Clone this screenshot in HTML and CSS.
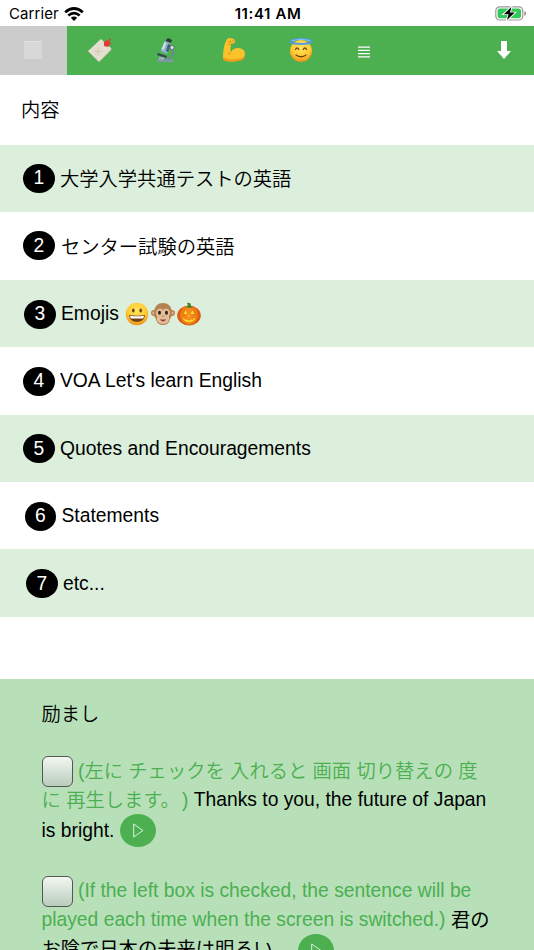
FILE: index.html
```html
<!DOCTYPE html>
<html lang="ja">
<head>
  <meta charset="UTF-8">
  <meta name="viewport" content="width=device-width, initial-scale=1.0">
  <title>英語</title>
  <link rel="stylesheet" href="styles.css">
</head>
<body>
  <!-- Status Bar -->
  <header class="status">
    <div class="carrier">
      <span>Carrier</span>
      <svg class="wifi" viewBox="0 0 20 14" fill="none" stroke="#000" stroke-width="2.7">
        <path d="M1.2 5.2Q10-2.2 18.8 5.2M4.3 8.5Q10 3.8 15.7 8.5"/>
        <path d="M6.8 10.8Q10 8.2 13.2 10.8L10 14Z" fill="#000" stroke="none"/>
      </svg>
    </div>
    <span class="time">11:41 AM</span>
    <svg class="battery" viewBox="0 0 32 15">
      <rect x=".8" y=".8" width="27" height="13.2" rx="4" fill="#fff" stroke="#999" stroke-width="1.2"/>
      <rect x="2.6" y="2.6" width="23.4" height="9.6" rx="2.3" fill="#34c759"/>
      <path d="M29.3 5v5q1.9-.7 1.9-2.5T29.3 5Z" fill="#999"/>
      <path d="M16.4 1 8.8 8.2h4.700L12 14l7.8-7.4H15Z" fill="#000" stroke="#fff" stroke-width="1.8" paint-order="stroke"/>
    </svg>
  </header>

  <!-- Tabs -->
  <nav class="tabs">
    <a class="tab active">
      <svg class="icon" viewBox="0 0 24 24">
        <rect x="3" y="3" width="18" height="18" rx="1" fill="#d8d8d8"/>
        <path d="M3.5 3.5h17" stroke="#e2e2e2"/>
      </svg>
    </a>
    <a class="tab">
      <svg class="icon" viewBox="0 0 24 24">
        <path d="M0 13 13 1l10 9q.8 1 0 2L11 24Z" fill="#e5dfd1"/>
        <path d="m0 13 11 10.500L23 11" fill="none" stroke="#d0cabb" stroke-width=".6"/>
        <g stroke="#cfc8b8" stroke-width=".7"><path d="M10 9v9M5.500 13.500h9M7 10.500l6 6M13 10.500l-6 6"/></g>
        <path d="m16 5 3-2 1 1 2.500-3M19 8l4-3" fill="none" stroke="#e33b38" stroke-width="1.5"/>
        <path d="m16 4 5-1 1 3-2 3-4-1Z" fill="#e33b38"/>
      </svg>
    </a>
    <a class="tab">
      <svg class="icon" viewBox="0 0 24 24">
        <path d="M16 11q4 3 1 7-2 3-6 3.500" fill="none" stroke="#718795" stroke-width="2"/>
        <path d="m10 3 6 3-4 10-6.500-3Z" fill="#8fb1c7"/>
        <path d="m9.500 4-3 7 2 1 3-7Z" fill="#cfe2ee"/>
        <path d="m11 2 2-2 4 2-1 3-5-2Z" fill="#303940"/>
        <path d="m13 6 3 1-3 7-2-1Z" fill="#425f74"/>
        <circle cx="17" cy="9.500" r="2" fill="#e3e8ea" stroke="#56656e" stroke-width=".8"/>
        <path d="m3 15 9 3-1 2-9-3Z" fill="#34434c"/>
        <path d="M3 21.500h15l1 2.500H2Z" fill="#8296a3"/>
        <path d="M4 19h5v3H4Z" fill="#9bafba"/>
      </svg>
    </a>
    <a class="tab">
      <svg class="icon" viewBox="0 0 24 24">
        <path d="M5 1q3-2 7 0 1 .6 1 2.500 0 1.600-1.500 2L9 6q-1 5 0 8 2-4 7-4 7 .3 7 6.500 0 6-8 6.500-7 1-11 0Q.7 22 1 19 1 8 5 1Z" fill="#fbc22b"/>
        <path d="M1 19q0 3 3 4 4 1 11 0 8-.5 8-6.500-2 4.500-8 4.500Q6 23 1 19Z" fill="#ef981a"/>
        <path d="M6 3q1 2 3 1M8 1.500l1 3M11 1.500v3M9 14q-1 2-3 2.500M9 6q-2 1-3 .5" fill="none" stroke="#d88b19" stroke-width=".8"/>
      </svg>
    </a>
    <a class="tab">
      <svg class="icon" viewBox="0 0 24 24">
        <defs>
          <radialGradient id="face" cx=".5" cy=".35" r=".65">
            <stop offset="0" stop-color="#ffe65b"/>
            <stop offset=".65" stop-color="#ffc934"/>
            <stop offset="1" stop-color="#ed8d18"/>
          </radialGradient>
        </defs>
        <circle cx="12" cy="13" r="11" fill="url(#face)"/>
        <ellipse cx="12" cy="3.500" rx="10.300" ry="2.500" fill="none" stroke="#559ce0" stroke-width="2"/>
        <path d="M3 2.700q9-3 18 0" fill="none" stroke="#93cbf6" stroke-width=".8"/>
        <path d="M6.500 11.500q1.700-3 3.300 0M14.200 11.500q1.700-3 3.300 0M7 17q5 3.500 10 0" fill="none" stroke="#714315" stroke-width="1.300" stroke-linecap="round"/>
      </svg>
    </a>
    <a class="tab menu">
      <svg viewBox="0 0 12 12" width="12" height="12" stroke="#fff" stroke-width="1.200">
        <path d="M0 1.200h12M0 4.400h12M0 7.600h12M0 10.800h12"/>
      </svg>
    </a>
    <a class="tab download">
      <svg viewBox="0 0 14 18" width="14" height="18"><path d="M4 0h6v10h4l-7 8-7-8h4Z" fill="#fff"/></svg>
    </a>
  </nav>

  <!-- Contents -->
  <h2 class="heading">内容</h2>
  <ul class="contents">
    <li><span class="num">1</span>大学入学共通テストの英語</li>
    <li><span class="num">2</span><span class="kana">センター試験の英語</span></li>
    <li class="latin nudge"><span class="num">3</span>Emojis
      <span class="emojis">
        <svg viewBox="0 0 24 24">
          <circle cx="12" cy="12" r="11.200" fill="url(#face)"/>
          <ellipse cx="8.300" cy="8.500" rx="1.300" ry="2" fill="#664016"/>
          <ellipse cx="15.700" cy="8.500" rx="1.300" ry="2" fill="#664016"/>
          <path d="M4 13q8 1.600 16 0-.7 7-8 7t-8-7Z" fill="#73401a"/>
          <path d="M5 13.700q7 1.300 14 0-.2 2-1 2.800H6q-.8-.8-1-2.800Z" fill="#fff"/>
        </svg>
        <svg viewBox="0 0 24 24">
          <circle cx="3" cy="11" r="3" fill="#b78350"/>
          <circle cx="21" cy="11" r="3" fill="#b78350"/>
          <circle cx="3" cy="11" r="1.600" fill="#edc3a0"/>
          <circle cx="21" cy="11" r="1.600" fill="#edc3a0"/>
          <path d="M12 1q8 0 9 9 1 3-2 7-1 6-7 6t-7-6q-3-4-2-7 1-9 9-9Z" fill="#b58351"/>
          <path d="M12 8q3-3 6 0 2 3 0 6 1 8-6 8t-6-8q-2-3 0-6 3-3 6 0Z" fill="#e3bd98"/>
          <ellipse cx="8.500" cy="10.700" rx="1.500" ry="2" fill="#30231c"/>
          <ellipse cx="15.500" cy="10.700" rx="1.500" ry="2" fill="#30231c"/>
          <path d="M11 14h.7M12.500 14h.7" stroke="#8a5f49"/>
          <path d="M9 17q3 1 6 0-1 2.500-3 2.500T9 17Z" fill="#963e35"/>
        </svg>
        <svg viewBox="0 0 24 24">
          <ellipse cx="12" cy="13.500" rx="11.800" ry="10" fill="#d95e10"/>
          <ellipse cx="12" cy="13" rx="9" ry="9.500" fill="#ee7d16"/>
          <ellipse cx="12" cy="13" rx="4" ry="9" fill="#f68a1b"/>
          <path d="M9 5q3-1 1-4 4-1 4 3l2 1q-3 2-7 0Z" fill="#46842d"/>
          <path d="m6.500 12 2-3.500 2 3.500ZM13.500 12l2-3.500 2 3.500ZM11 14.500l1-2 1 2ZM5.500 15.500l2 1 1 1.500 1.500-.5 1 1h2l1-1 1.500.5 1-1.500 2-1q-1.500 4.500-6.500 4.500t-6.500-4.500Z" fill="#ffdf30"/>
        </svg>
      </span>
    </li>
    <li class="latin"><span class="num">4</span>VOA Let's learn English</li>
    <li class="latin"><span class="num">5</span>Quotes and Encouragements</li>
    <li class="latin nudge-2"><span class="num">6</span>Statements</li>
    <li class="latin nudge-3"><span class="num">7</span>etc...</li>
  </ul>

  <!-- Encouragement -->
  <section class="encourage">
    <h2>励まし</h2>
    <div class="sentence">
      <div class="line first"><span class="check"></span><span class="hint ja">(左に チェックを 入れると 画面 切り替えの 度</span></div>
      <div class="line"><span class="hint ja">に 再生します。<span class="paren">)</span></span>&nbsp;<span>Thanks to you, the future of Japan</span></div>
      <div class="line last"><span>is bright.</span>
        <span class="play"><svg viewBox="0 0 11 15" width="11" height="15"><path d="M.7 1 10 7.500.7 14Z" fill="none" stroke="#dcefdc"/></svg></span>
      </div>
    </div>
    <div class="sentence">
      <div class="line first"><span class="check"></span><span class="hint">(If the left box is checked, the sentence will be</span></div>
      <div class="line"><span class="hint">played each time when the screen is switched.)</span>&nbsp;<span class="ja">君の</span></div>
      <div class="line last"><span class="ja up">お陰で日本の未来は明るい。</span>
        <span class="play"><svg viewBox="0 0 11 15" width="11" height="15"><path d="M.7 1 10 7.500.7 14Z" fill="none" stroke="#dcefdc"/></svg></span>
      </div>
    </div>
  </section>
</body>
</html>
```
FILE: styles.css
```css
* {
  box-sizing: border-box;
}

body {
  margin: 0;
  height: 950px;
  overflow: hidden;
  background: #fff;
  color: #000;
  font-family: "Liberation Sans", "Noto Sans CJK JP", sans-serif;
  font-size: 19.3px;
  text-spacing-trim: space-all;
}

h2 {
  margin: 0;
  font-size: 19.3px;
  font-weight: 350;
}

/* Status Bar */
.status {
  display: grid;
  grid-template-columns: 1fr auto 1fr;
  align-items: center;
  height: 26px;
  padding: 1px 7px 0 9px;
  font-family: Inter, sans-serif;
  font-size: 15px;
  letter-spacing: 0.1px;
}

.carrier {
  display: flex;
  align-items: center;
  gap: 5px;
}

.wifi {
  width: 20px;
  height: 14px;
}

.time {
  font-weight: 600;
  letter-spacing: 0.6px;
}

.battery {
  width: 32px;
  height: 15px;
  justify-self: end;
}

/* Tabs */
.tabs {
  display: flex;
  height: 49px;
  background: #4caf50;
}

.tab {
  display: flex;
  width: 67px;
  padding: 0 1px 1px 0;
  align-items: center;
  justify-content: center;
}

.tab.active {
  background: #ccc;
}

.icon {
  width: 24px;
  height: 24px;
}

.menu {
  width: 58px;
  padding: 3px 0 0;
}

.download {
  width: 61px;
  margin-left: auto;
  padding: 0 0 2px;
}

/* Contents */
.heading {
  display: flex;
  align-items: center;
  height: 70px;
  padding: 0 0 2px 21px;
}

.contents {
  margin: 0 0 62px;
  padding: 0;
  list-style: none;
}

.contents li {
  display: flex;
  align-items: center;
  height: 67.42px;
  padding: 0 0 1px 23px;
  font-weight: 350;
  white-space: nowrap;
}

.contents li:nth-child(odd) {
  background: #dbefdc;
}

.contents .latin {
  padding-top: 1px;
  padding-bottom: 0;
}

.contents .nudge {
  padding-left: 24px;
}

.contents .nudge-2 {
  padding-left: 24.5px;
}

.contents .nudge-3 {
  padding-left: 26px;
}

.kana {
  padding-left: 1px;
}

.num {
  display: flex;
  align-items: center;
  justify-content: center;
  width: 31.5px;
  height: 29px;
  margin-right: 5.5px;
  border-radius: 50%;
  background: #000;
  color: #fff;
}

.emojis {
  display: flex;
  gap: 2px;
  margin-left: 6px;
}

.emojis svg {
  width: 24px;
  height: 24px;
}

/* Encouragement */
.encourage {
  height: 271px;
  padding: 19px 0 0 41.5px;
  overflow: hidden;
  background: #b7e0b9;
}

.encourage h2 {
  display: flex;
  align-items: center;
  height: 30px;
}

.sentence {
  margin-top: 27px;
}

.line {
  display: flex;
  align-items: center;
  height: 27px;
  white-space: nowrap;
}

.line.first {
  height: 32px;
}

.line.last {
  height: 34px;
}

.hint {
  color: #4caf50;
  font-weight: 350;
}

/* CJK glyphs sit lower in the line than latin ones */
.ja {
  padding-bottom: 2px;
}

.ja.up {
  padding-bottom: 6px;
}

.paren {
  margin-left: 2px;
}

.check {
  width: 31px;
  height: 31px;
  margin: 1px 5.5px 0 0;
  border: 1.5px solid #555;
  border-radius: 6px;
  background: linear-gradient(#f2f7f2, #b9cdbb);
}

.play {
  display: flex;
  align-items: center;
  justify-content: center;
  width: 36px;
  height: 33px;
  margin-left: 6px;
  border-radius: 50%;
  background: #4caf50;
}
```
